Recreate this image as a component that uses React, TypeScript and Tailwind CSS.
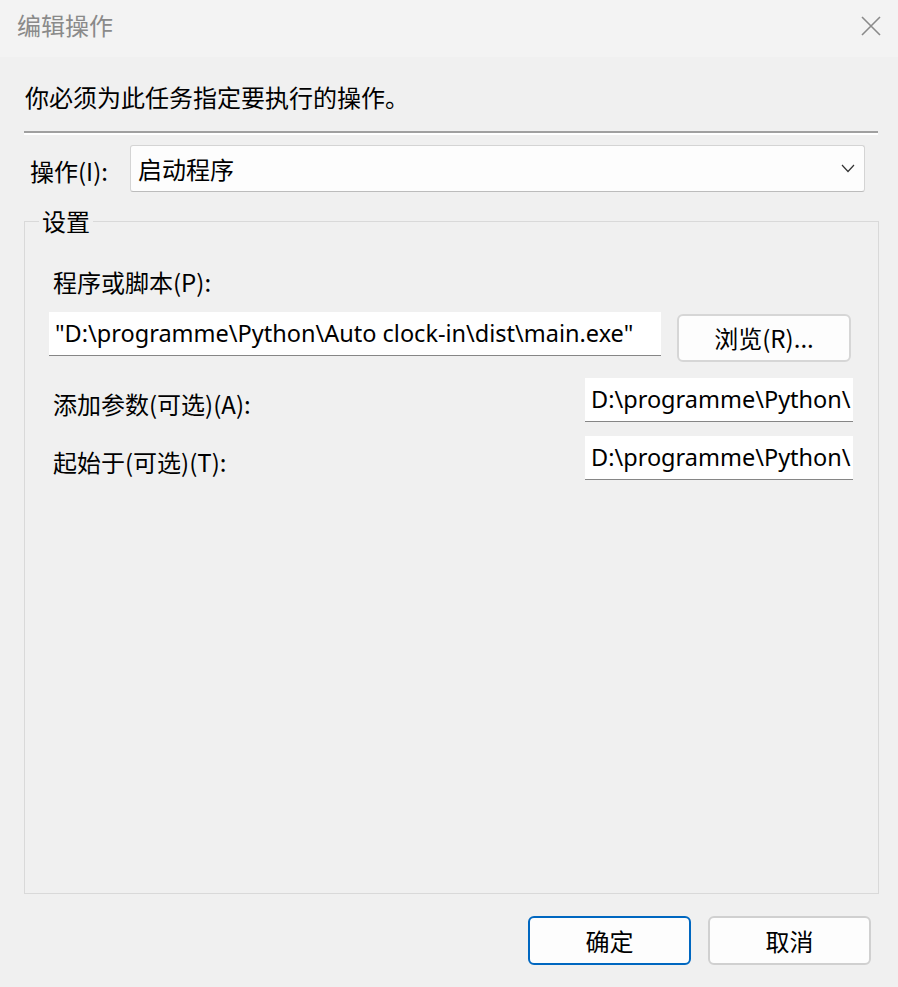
import { useState } from 'react';

const cjk = "font-['Noto_Sans_CJK_SC','Noto_Sans',sans-serif]";
const latin = "font-['Noto_Sans','Noto_Sans_CJK_SC',sans-serif]";

function TextBox({ value, className }: { value: string; className: string }) {
    return (
        <div
            className={`bg-white border-b border-[#868686] overflow-hidden whitespace-nowrap flex items-center text-[23.5px] text-black ${latin} ${className}`}
        >
            {value}
        </div>
    );
}

export default function App() {
    const [action] = useState('启动程序');
    const [program] = useState('"D:\\programme\\Python\\Auto clock-in\\dist\\main.exe"');
    const [args] = useState('D:\\programme\\Python\\');

    return (
        <div className={`w-[898px] h-[987px] bg-[#f0f0f0] flex flex-col ${cjk} text-black`}>
            {/* 标题栏 */}
            <div className="h-[57px] bg-[#f3f3f3] flex items-center justify-between pl-[17px] pr-[17px] pb-[7px]">
                <span className="text-[24px] text-[#8a8a8a] leading-none">编辑操作</span>
                <svg width="20" height="20" viewBox="0 0 20 20" className="mt-[1px]">
                    <path d="M1 1 L19 19 M19 1 L1 19" stroke="#8a8a8a" strokeWidth="1.6" fill="none" />
                </svg>
            </div>

            <div className="flex-1 flex flex-col pl-[24px] pr-[19px]">
                <p className="mt-[24px] text-[24px] leading-[32px] pl-[1px]">你必须为此任务指定要执行的操作。</p>

                <div className="mt-[18px] mr-[1px]">
                    <div className="h-[2px] bg-[#a0a0a0]" />
                    <div className="h-[2px] bg-white" />
                </div>

                {/* 操作 */}
                <div className="mt-[10px] flex items-center pl-[6px] pr-[14px]">
                    <span className="w-[100px] text-[24px] leading-none pt-[4px]">操作(I):</span>
                    <div className="flex-1 h-[47px] bg-[#fdfdfd] border border-[#d4d4d4] border-b-[#bcbcbc] rounded-[3px] flex items-center justify-between pl-[7px] pr-[9px]">
                        <span className="text-[24px] leading-none">{action}</span>
                        <svg width="14" height="9" viewBox="0 0 14 9">
                            <path d="M1 1 L7 7.5 L13 1" stroke="#333" strokeWidth="1.2" fill="none" />
                        </svg>
                    </div>
                </div>

                {/* 设置 */}
                <fieldset className="mt-[14px] border border-[#d9d9d9] h-[688px] p-0">
                    <legend className="ml-[14px] px-[3px] text-[24px] leading-[30px]">设置</legend>
                    <div className="px-[24px]">
                        <div className="text-[24px] leading-[30px] pt-[31px] pl-[4px]">程序或脚本(P):</div>
                        <div className="mt-[15px] flex items-start">
                            <TextBox value={program} className="w-[612px] h-[44px] pl-[6px]" />
                            <button className="ml-[16px] mt-[2px] w-[174px] h-[48px] bg-[#fdfdfd] border-2 border-[#d6d6d6] rounded-[6px] text-[24px] leading-none">
                                浏览(R)...
                            </button>
                        </div>
                        <div className="mt-[16px] flex items-center justify-between pr-[1px]">
                            <span className="text-[24px] leading-none pl-[4px] pt-[8px]">添加参数(可选)(A):</span>
                            <TextBox value={args} className="w-[268px] h-[44px] pl-[6px]" />
                        </div>
                        <div className="mt-[14px] flex items-center justify-between pr-[1px]">
                            <span className="text-[24px] leading-none pl-[4px] pt-[8px]">起始于(可选)(T):</span>
                            <TextBox value={args} className="w-[268px] h-[44px] pl-[6px]" />
                        </div>
                    </div>
                </fieldset>

                {/* 按钮 */}
                <div className="mt-[22px] flex justify-end gap-[17px] pr-[8px]">
                    <button className="w-[163px] h-[49px] bg-[#fdfdfd] border-2 border-[#0067c0] rounded-[6px] text-[24px] leading-none">
                        确定
                    </button>
                    <button className="w-[163px] h-[49px] bg-[#fdfdfd] border-2 border-[#d0d0d0] rounded-[6px] text-[24px] leading-none">
                        取消
                    </button>
                </div>
            </div>
        </div>
    );
}
